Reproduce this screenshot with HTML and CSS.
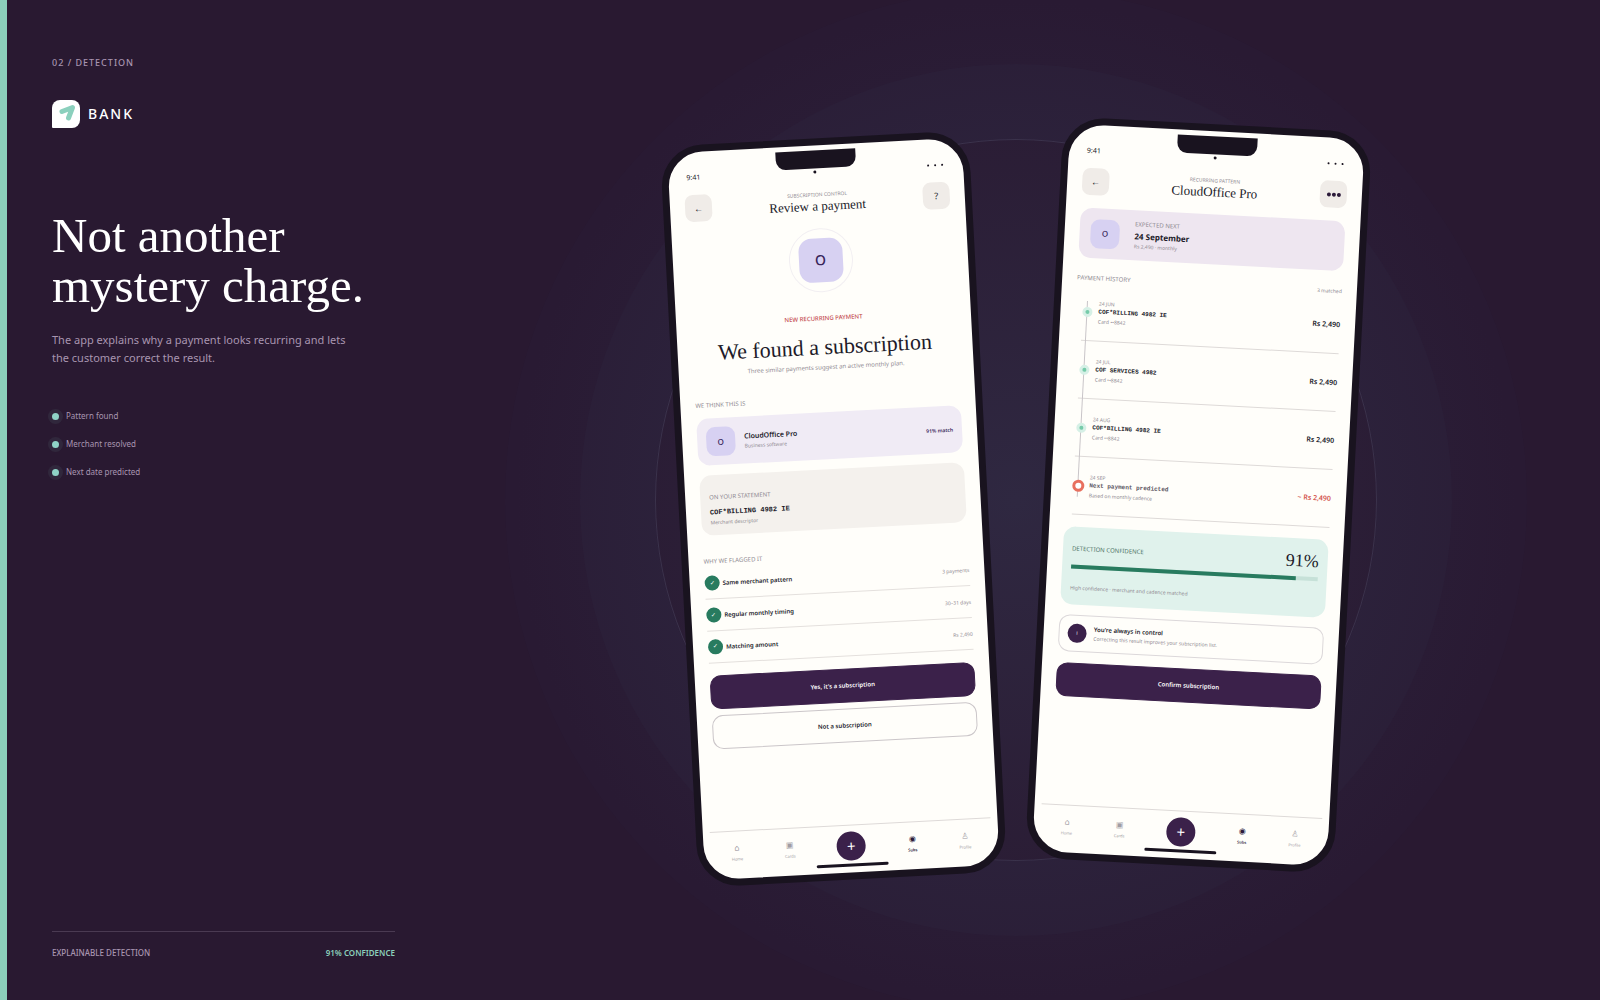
FILE: index.html
```html
<!DOCTYPE html>
<html lang="en">

<head>
    <meta charset="UTF-8">
    <meta name="viewport" content="width=device-width, initial-scale=1.0">
    <title>Bank - Detection</title>
    <link rel="stylesheet" href="styles.css">
</head>

<body>

    <div class="page">
        <!-- Intro -->
        <section class="intro">
            <p class="chapter">02 / DETECTION</p>
            <div class="brand">
                <svg class="brand-mark" viewBox="0 0 28 28" aria-hidden="true">
                    <path d="M8 0h12a8 8 0 0 1 8 8v12a8 8 0 0 1-8 8H1a1 1 0 0 1-1-1V8a8 8 0 0 1 8-8z" fill="#fff" />
                    <path d="M10 11.500L20.500 7.500L16.500 18" fill="none" stroke="#8bd0bd" stroke-width="5" stroke-linecap="round" stroke-linejoin="round" />
                </svg>
                <span class="brand-name">BANK</span>
            </div>
            <h1>Not another mystery charge.</h1>
            <p class="lead">The app explains why a payment looks recurring and lets the customer correct the result.</p>
            <ul class="points">
                <li>Pattern found</li>
                <li>Merchant resolved</li>
                <li>Next date predicted</li>
            </ul>
            <div class="intro-footer">
                <span>EXPLAINABLE DETECTION</span>
                <strong>91% CONFIDENCE</strong>
            </div>
        </section>

        <main class="stage">
            <!-- Review a payment -->
            <article class="phone phone-left">
                <div class="notch"></div>
                <div class="status">
                    <span>9:41</span>
                    <i class="camera"></i>
                    <span class="signal"><i></i><i></i><i></i></span>
                </div>
                <header class="topbar">
                    <button class="icon-btn" aria-label="Back">←</button>
                    <div class="topbar-title">
                        <small>SUBSCRIPTION CONTROL</small>
                        <h2>Review a payment</h2>
                    </div>
                    <button class="icon-btn" aria-label="Help">?</button>
                </header>

                <div class="hero">
                    <div class="hero-ring"><span class="tile tile-large">O</span></div>
                    <p class="hero-tag">NEW RECURRING PAYMENT</p>
                    <h3>We found a subscription</h3>
                    <p class="hero-text">Three similar payments suggest an active monthly plan.</p>
                </div>

                <p class="label label-first">WE THINK THIS IS</p>
                <div class="merchant">
                    <span class="tile">O</span>
                    <div class="merchant-text">
                        <strong>CloudOffice Pro</strong>
                        <small>Business software</small>
                    </div>
                    <b class="match">91% match</b>
                </div>
                <div class="statement">
                    <p class="label">ON YOUR STATEMENT</p>
                    <code>COF*BILLING 4982 IE</code>
                    <small>Merchant descriptor</small>
                </div>

                <p class="label label-reasons">WHY WE FLAGGED IT</p>
                <ul class="reasons">
                    <li><i class="check">✓</i><strong>Same merchant pattern</strong><span>3 payments</span></li>
                    <li><i class="check">✓</i><strong>Regular monthly timing</strong><span>30–31 days</span></li>
                    <li><i class="check">✓</i><strong>Matching amount</strong><span>Rs 2,490</span></li>
                </ul>

                <div class="actions">
                    <button class="btn btn-primary">Yes, it's a subscription</button>
                    <button class="btn">Not a subscription</button>
                </div>

                <nav class="tabs">
                    <a href="#"><i>⌂</i>Home</a>
                    <a href="#"><i>▣</i>Cards</a>
                    <button class="add" aria-label="Add">+</button>
                    <a href="#" class="active"><i>◉</i>Subs</a>
                    <a href="#"><i>♙</i>Profile</a>
                </nav>
                <div class="home-bar"></div>
            </article>

            <!-- Recurring pattern -->
            <article class="phone phone-right">
                <div class="notch"></div>
                <div class="status">
                    <span>9:41</span>
                    <i class="camera"></i>
                    <span class="signal"><i></i><i></i><i></i></span>
                </div>
                <header class="topbar">
                    <button class="icon-btn" aria-label="Back">←</button>
                    <div class="topbar-title">
                        <small>RECURRING PATTERN</small>
                        <h2>CloudOffice Pro</h2>
                    </div>
                    <button class="icon-btn more" aria-label="More"><i></i><i></i><i></i></button>
                </header>

                <div class="expected">
                    <span class="tile">O</span>
                    <div class="expected-text">
                        <small class="label">EXPECTED NEXT</small>
                        <strong>24 September</strong>
                        <small>Rs 2,490 · monthly</small>
                    </div>
                </div>

                <div class="history-head">
                    <p class="label">PAYMENT HISTORY</p>
                    <span>3 matched</span>
                </div>
                <ol class="history">
                    <li>
                        <i class="dot"></i>
                        <div class="entry"><small>24 JUN</small><code>COF*BILLING 4982 IE</code><small>Card ••8842</small></div>
                        <b>Rs 2,490</b>
                    </li>
                    <li>
                        <i class="dot"></i>
                        <div class="entry"><small>24 JUL</small><code>COF SERVICES 4982</code><small>Card ••8842</small></div>
                        <b>Rs 2,490</b>
                    </li>
                    <li>
                        <i class="dot"></i>
                        <div class="entry"><small>24 AUG</small><code>COF*BILLING 4982 IE</code><small>Card ••8842</small></div>
                        <b>Rs 2,490</b>
                    </li>
                    <li class="next">
                        <i class="dot"></i>
                        <div class="entry"><small>24 SEP</small><code>Next payment predicted</code><small>Based on monthly cadence</small></div>
                        <b>~ Rs 2,490</b>
                    </li>
                </ol>

                <div class="confidence">
                    <div class="confidence-head">
                        <span>DETECTION CONFIDENCE</span>
                        <strong>91%</strong>
                    </div>
                    <div class="meter"><div class="meter-fill" style="width: 91%"></div></div>
                    <small>High confidence · merchant and cadence matched</small>
                </div>

                <div class="notice">
                    <i class="info">i</i>
                    <div>
                        <strong>You're always in control</strong>
                        <small>Correcting this result improves your subscription list.</small>
                    </div>
                </div>
                <button class="btn btn-primary">Confirm subscription</button>

                <nav class="tabs">
                    <a href="#"><i>⌂</i>Home</a>
                    <a href="#"><i>▣</i>Cards</a>
                    <button class="add" aria-label="Add">+</button>
                    <a href="#" class="active"><i>◉</i>Subs</a>
                    <a href="#"><i>♙</i>Profile</a>
                </nav>
                <div class="home-bar"></div>
            </article>
        </main>
    </div>

</body>

</html>
```
FILE: styles.css
```css
* {
    box-sizing: border-box;
}

body {
    margin: 0;
    background-color: #291931;
    color: #211a29;
    font-family: "Noto Sans", sans-serif;
}

h1,
h2,
h3,
p,
ul,
ol {
    margin: 0;
    padding: 0;
    font-weight: 400;
}

h1,
h2,
h3 {
    font-family: "Liberation Serif", serif;
}

ul,
ol {
    list-style: none;
}

i {
    font-style: normal;
}

button {
    padding: 0;
    border: none;
    font-family: inherit;
    color: inherit;
    cursor: pointer;
}

.page {
    display: grid;
    grid-template-columns: 424px 1fr;
    min-height: 100vh;
    border-left: 7px solid #8bcfbb;
    overflow: hidden;
}

/* Intro column */
.intro {
    display: flex;
    flex-direction: column;
    padding: 57px 36px 41px 45px;
    color: #a895b0;
}

.chapter {
    font-size: 9px;
    line-height: 12px;
    font-weight: 500;
    letter-spacing: 1px;
}

.brand {
    display: flex;
    align-items: center;
    gap: 8px;
    margin-top: 31px;
}

.brand-mark {
    width: 28px;
    height: 28px;
}

.brand-name {
    font-size: 14px;
    line-height: 20px;
    font-weight: 500;
    letter-spacing: 2px;
    color: #fff;
}

.intro h1 {
    margin-top: 83px;
    font-size: 49px;
    line-height: 50px;
    color: #fff;
}

.lead {
    max-width: 310px;
    margin-top: 20px;
    font-size: 11px;
    line-height: 18px;
}

.points {
    display: grid;
    gap: 16px;
    margin-top: 43px;
    font-size: 8px;
    line-height: 12px;
}

.points li {
    display: flex;
    align-items: center;
    gap: 7px;
}

.points li::before {
    content: "";
    width: 7px;
    height: 7px;
    border-radius: 50%;
    background-color: #8fd3c7;
    box-shadow: 0 0 0 4px rgba(139, 208, 189, 0.08);
}

.intro-footer {
    display: flex;
    justify-content: space-between;
    margin-top: auto;
    padding-top: 15px;
    border-top: 1px solid #4a3a52;
    font-size: 8px;
    line-height: 12px;
    font-weight: 500;
}

.intro-footer strong {
    font-weight: 600;
    color: #8bcfbb;
}

/* Stage */
.stage {
    position: relative;
    display: flex;
    justify-content: center;
    align-items: center;
    gap: 56px;
    background: radial-gradient(circle, #2f2841 0, #291931 500px);
}

.stage::before {
    content: "";
    position: absolute;
    width: 720px;
    height: 720px;
    border: 1px solid rgba(140, 160, 190, 0.16);
    border-radius: 50%;
    box-shadow: 0 0 0 75px rgba(90, 140, 170, 0.03), 0 0 0 150px rgba(90, 120, 170, 0.015);
}

/* Phone */
.phone {
    position: relative;
    display: flex;
    flex-direction: column;
    flex: none;
    width: 309px;
    height: 742px;
    padding: 0 15px;
    border: 7px solid #19131f;
    border-radius: 42px;
    background-color: #fffefa;
    font-size: 6px;
    line-height: 10px;
}

.phone-left {
    margin-top: 18px;
    transform: rotate(-3deg);
}

.phone-right {
    margin-bottom: 10px;
    transform: rotate(3deg);
}

.phone small {
    display: block;
    font-size: 5px;
    line-height: 9px;
    color: #8f8a92;
}

.notch {
    position: absolute;
    top: 5px;
    left: 50%;
    width: 80px;
    height: 18px;
    margin-left: -40px;
    border-radius: 0 0 10px 10px;
    background-color: #19131f;
}

.status {
    display: grid;
    grid-template-columns: 1fr auto 1fr;
    align-items: center;
    height: 34px;
    padding: 18px 5px 0 3px;
    font-size: 7px;
}

.camera {
    width: 3px;
    height: 3px;
    border-radius: 50%;
    background-color: #19131f;
}

.signal {
    display: flex;
    justify-content: flex-end;
    gap: 5px;
}

.signal i {
    width: 2px;
    height: 2px;
    border-radius: 50%;
    background-color: #19131f;
}

.topbar {
    display: flex;
    justify-content: space-between;
    align-items: center;
    height: 27px;
    margin: 9px 0 13px;
    text-align: center;
}

.topbar-title small {
    line-height: 8px;
}

.topbar h2 {
    font-size: 13px;
    line-height: 16px;
}

.icon-btn {
    width: 27px;
    height: 27px;
    border-radius: 8px;
    background-color: #f0ece8;
    font-size: 9px;
}

.more {
    display: flex;
    justify-content: center;
    align-items: center;
    gap: 1px;
}

.more i {
    width: 4px;
    height: 4px;
    border-radius: 50%;
    background-color: #2c1b3a;
}

.tile {
    display: grid;
    place-items: center;
    flex: none;
    width: 29px;
    height: 29px;
    border-radius: 9px;
    background-color: #d7d1f2;
    color: #38265a;
    font-size: 8px;
    font-weight: 500;
}

.tile-large {
    width: 44px;
    height: 44px;
    border-radius: 13px;
    font-size: 14px;
}

.phone .label {
    font-size: 6px;
    line-height: 10px;
    color: #8f8a92;
}

.btn {
    flex: none;
    height: 34px;
    border: 1px solid #cbc6c9;
    border-radius: 11px;
    background-color: #fffefa;
    font-size: 6px;
    font-weight: 600;
}

.btn-primary {
    border-color: #3b214a;
    background-color: #3b214a;
    color: #fff;
}

/* Review screen */
.hero {
    text-align: center;
}

.hero-ring {
    display: grid;
    place-items: center;
    width: 64px;
    height: 64px;
    margin: 0 auto 21px;
    border: 1px solid #f2eff2;
    border-radius: 50%;
}

.hero-tag {
    font-weight: 500;
    color: #c44a4f;
}

.hero h3 {
    margin-top: 10px;
    font-size: 22px;
    line-height: 28px;
}

.hero-text {
    margin-top: 1px;
    color: #8f8a92;
}

.phone .label-first {
    margin-top: 22px;
}

.merchant {
    display: flex;
    align-items: center;
    gap: 9px;
    height: 47px;
    margin-top: 8px;
    padding: 0 9px;
    border-radius: 12px;
    background-color: #f0ebf5;
}

.merchant strong {
    display: block;
    font-size: 7px;
    font-weight: 600;
    line-height: 11px;
}

.match {
    margin-left: auto;
    font-size: 5px;
    font-weight: 600;
    color: #38265a;
}

.statement {
    height: 60px;
    margin-top: 10px;
    padding: 17px 9px 0;
    border-radius: 12px;
    background-color: #f4f1ed;
}

.statement code,
.history code {
    display: block;
    font-family: "Liberation Mono", monospace;
    font-weight: 700;
}

.statement code {
    margin-top: 4px;
    font-size: 7px;
    line-height: 12px;
}

.phone .label-reasons {
    margin-top: 21px;
}

.reasons {
    margin-top: 1px;
}

.reasons li {
    display: flex;
    align-items: center;
    gap: 3px;
    height: 32px;
    border-bottom: 1px solid #e4e0dd;
}

.reasons strong {
    font-weight: 600;
}

.reasons span {
    margin-left: auto;
    font-size: 5px;
    color: #8f8a92;
}

.check {
    width: 15px;
    height: 15px;
    border-radius: 50%;
    background-color: #287b5f;
    color: #fff;
    line-height: 15px;
    text-align: center;
}

.actions {
    display: grid;
    gap: 6px;
    margin-top: 12px;
}

/* Pattern screen */
.expected {
    display: flex;
    align-items: center;
    gap: 15px;
    height: 50px;
    padding: 0 11px;
    border-radius: 12px;
    background-color: #eee6f0;
}

.expected strong {
    display: block;
    font-size: 8px;
    line-height: 13px;
}

.history-head {
    display: flex;
    justify-content: space-between;
    margin-top: 15px;
}

.history-head span {
    font-size: 5px;
    color: #8f8a92;
}

.history {
    position: relative;
    padding: 0 0 0 7px;
}

/* Line behind the dots */
.history::before {
    content: "";
    position: absolute;
    top: 18px;
    bottom: 18px;
    left: 11px;
    width: 1px;
    background-color: #c9c5c8;
}

.history li {
    display: flex;
    align-items: center;
    gap: 6px;
    height: 58px;
    border-bottom: 1px solid #dedad8;
}

.history small {
    line-height: 8px;
}

.history code {
    font-size: 6px;
    line-height: 10px;
}

.history b {
    margin-left: auto;
    font-size: 7px;
    font-weight: 600;
}

.dot {
    position: relative;
    width: 10px;
    height: 10px;
    border: 3px solid #d6f0e6;
    border-radius: 50%;
    background-color: #76cba9;
}

.next .dot {
    width: 12px;
    height: 12px;
    margin: 0 -1px;
    border-color: #e8705f;
    background-color: #fff;
}

.next b {
    color: #d4574f;
}

.next code {
    color: #5b5561;
}

.confidence {
    height: 78px;
    margin-top: 12px;
    padding: 12px 9px;
    border-radius: 12px;
    background-color: #e0f2ec;
}

.confidence-head {
    display: flex;
    justify-content: space-between;
    align-items: center;
    height: 20px;
    color: #53766a;
}

.confidence-head strong {
    font-family: "Liberation Serif", serif;
    font-size: 18px;
    line-height: 20px;
    font-weight: 400;
    color: #211a29;
}

.meter {
    height: 4px;
    margin: 6px 0 15px;
    background-color: #c6e1d8;
}

.meter-fill {
    height: 4px;
    background-color: #287b5f;
}

.notice {
    display: flex;
    align-items: center;
    gap: 7px;
    height: 37px;
    margin: 10px 0 11px;
    padding: 0 8px;
    border: 1px solid #dcd8da;
    border-radius: 11px;
}

.notice strong {
    display: block;
    font-weight: 600;
}

.info {
    width: 19px;
    height: 19px;
    border-radius: 50%;
    background-color: #3b214a;
    color: #fff;
    font-size: 5px;
    line-height: 19px;
    text-align: center;
}

/* Tab bar */
.tabs {
    display: grid;
    grid-template-columns: 1fr 1fr 70px 1fr 1fr;
    justify-items: center;
    height: 48px;
    margin: auto -8px 0;
    padding-top: 11px;
    border-top: 1px solid #dedad8;
}

.tabs a {
    color: #a19ca3;
    font-size: 4px;
    line-height: 10px;
    text-align: center;
    text-decoration: none;
}

.tabs i {
    display: block;
    font-family: "DejaVu Sans", sans-serif;
    font-size: 8px;
    line-height: 12px;
}

.tabs .active {
    color: #2c1b3a;
    font-weight: 600;
}

.add {
    width: 29px;
    height: 29px;
    margin-top: -5px;
    border-radius: 50%;
    background-color: #3b214a;
    color: #fff;
    font-size: 15px;
    line-height: 29px;
}

.home-bar {
    position: absolute;
    bottom: 6px;
    left: 50%;
    width: 72px;
    height: 3px;
    margin-left: -36px;
    border-radius: 2px;
    background-color: #19131f;
}
```
